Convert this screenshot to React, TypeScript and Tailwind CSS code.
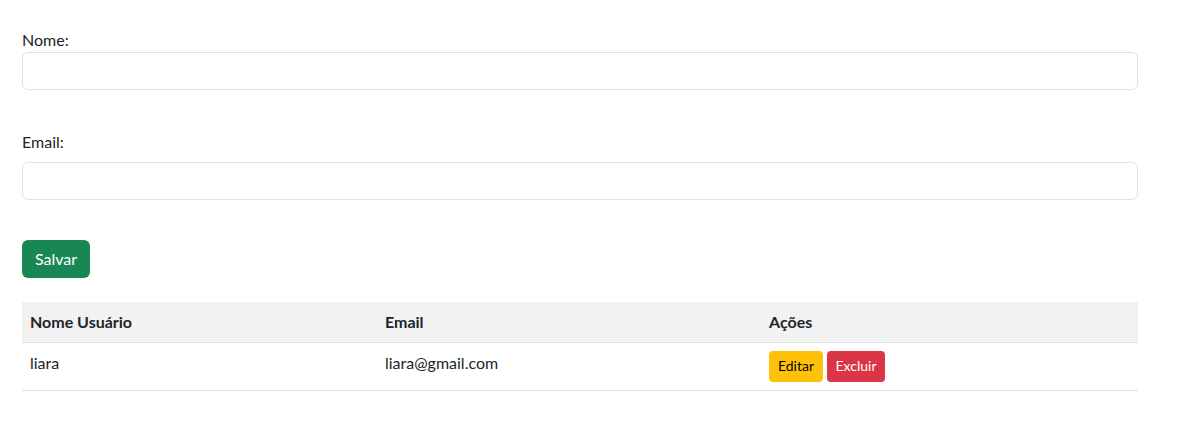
import React from "react";

const usuarios = [{ nome: "liara", email: "liara@gmail.com" }];

export default function App() {
    return (
        <div className="min-h-screen bg-white text-[#212529] font-['Segoe_UI','Lato',sans-serif] text-base">
            <div className="ml-[22px] w-[1116px] pt-[28px]">
                {/* formulario */}
                <form onSubmit={(e) => e.preventDefault()}>
                    <label className="block leading-6">Nome:</label>
                    <input
                        type="text"
                        className="block w-full h-[38px] px-3 rounded-md border border-[#dee2e6] bg-white outline-none"
                    />

                    <label className="block leading-6 mt-[40px] mb-2">Email:</label>
                    <input
                        type="email"
                        className="block w-full h-[38px] px-3 rounded-md border border-[#dee2e6] bg-white outline-none"
                    />

                    <button
                        type="submit"
                        className="mt-[40px] h-[38px] w-[68px] rounded-md bg-[#198754] text-white leading-6"
                    >
                        Salvar
                    </button>
                </form>

                {/* lista de usuarios */}
                <table className="mt-[24px] w-full border-collapse text-left">
                    <thead>
                        <tr className="bg-[#f2f2f2] border-b border-[#dee2e6]">
                            <th className="w-[355px] h-[40px] px-2 font-bold leading-6">Nome Usuário</th>
                            <th className="w-[384px] h-[40px] px-2 font-bold leading-6">Email</th>
                            <th className="h-[40px] px-2 font-bold leading-6">Ações</th>
                        </tr>
                    </thead>
                    <tbody>
                        {usuarios.map((u) => (
                            <tr key={u.email} className="border-b border-[#dee2e6]">
                                <td className="h-[47px] px-2 py-2 align-top leading-6">{u.nome}</td>
                                <td className="h-[47px] px-2 py-2 align-top leading-6">{u.email}</td>
                                <td className="h-[47px] px-2 py-2 align-top">
                                    <div className="flex gap-1">
                                        <button className="h-[31px] w-[54px] rounded bg-[#ffc107] text-black text-sm">
                                            Editar
                                        </button>
                                        <button className="h-[31px] w-[58px] rounded bg-[#dc3545] text-white text-sm">
                                            Excluir
                                        </button>
                                    </div>
                                </td>
                            </tr>
                        ))}
                    </tbody>
                </table>
            </div>
        </div>
    );
}
